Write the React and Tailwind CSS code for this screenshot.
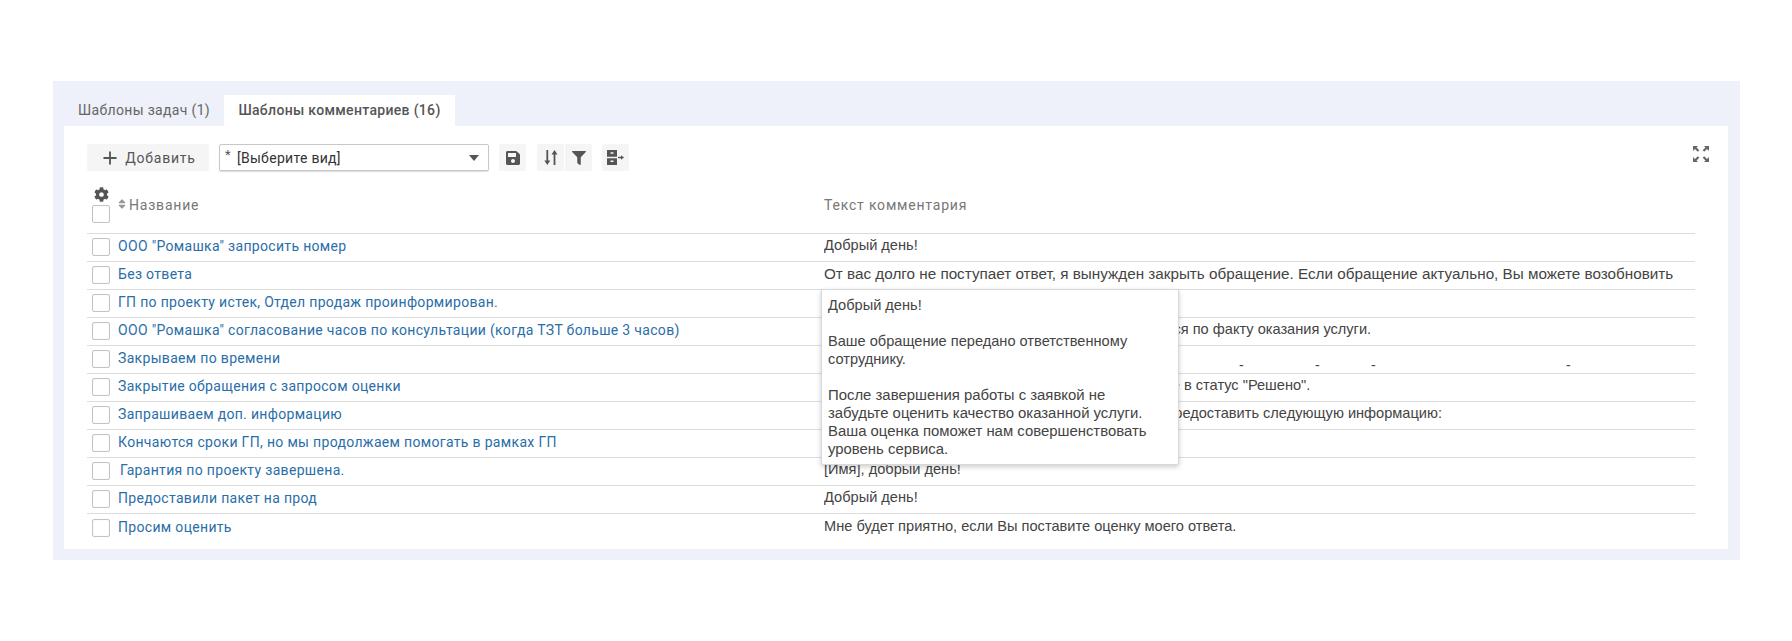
import React from "react";
import { FaSave, FaFilter, FaCog, FaSort } from "react-icons/fa";
import { Plus } from "lucide-react";

const rows = [
  { n: 'ООО "Ромашка" запросить номер', t: "Добрый день!" },
  { n: "Без ответа", t: "От вас долго не поступает ответ, я вынужден закрыть обращение. Если обращение актуально, Вы можете возобновить", big: true },
  { n: "ГП по проекту истек, Отдел продаж проинформирован.", t: "Добрый день!" },
  { n: 'ООО "Ромашка" согласование часов по консультации (когда ТЗТ больше 3 часов)', t: "Добрый день! Оплата консультации теперь считается по факту оказания услуги." },
  { n: "Закрываем по времени", t: "", dashes: true },
  { n: "Закрытие обращения с запросом оценки", t: 'Добрый день! Сегодня я переведу Ваше обращение в статус "Решено".' },
  { n: "Запрашиваем доп. информацию", t: "Добрый день! Для решения вопросов просим Вас предоставить следующую информацию:" },
  { n: "Кончаются сроки ГП, но мы продолжаем помогать в рамках ГП", t: "Добрый день!" },
  { n: "Гарантия по проекту завершена.", t: "[Имя], добрый день!", extra: true },
  { n: "Предоставили пакет на прод", t: "Добрый день!" },
  { n: "Просим оценить", t: "Мне будет приятно, если Вы поставите оценку моего ответа." },
];

function Check() {
  return <span className="block w-[18px] h-[18px] shrink-0 rounded-[2px] border border-[#c4c4c4] bg-white shadow-[inset_0_0_1px_#ddd]" />;
}

function IconBtn({ children, className = "" }) {
  return <button className={`w-[27px] h-[27px] rounded-[2px] bg-[#f5f5f5] flex items-center justify-center text-[#555] ${className}`}>{children}</button>;
}

function SortArrows() {
  return (
    <svg width="14" height="15" viewBox="0 0 14 15" fill="#555">
      <path d="M2.400 0h1.800v10.500H6.300L3.300 15 .3 10.500h2.100z" />
      <path d="M9.600 15h1.800V4.500h2.100L10.500 0 7.500 4.500h2.100z" />
    </svg>
  );
}

function ExportIcon() {
  return (
    <svg width="17" height="15" viewBox="0 0 17 15" fill="#555">
      <path fillRule="evenodd" d="M0 0h10v6.800H0zM3.500 2.200v1.600h3V2.200zM0 8.200h10V15H0zM3.500 10.400V12h3v-1.600z" />
      <path d="M11 6.700h3V5.200L17 7.500l-3 2.300V8.300h-3z" />
    </svg>
  );
}

function ExpandIcon() {
  return (
    <svg width="16" height="16" viewBox="0 0 16 16" fill="#666">
      <path d="M0 0h5L3.500 1.500 6.300 4.300 4.800 5.800 2 3 .5 4.500 0 5z" />
      <path d="M16 0h-5l1.500 1.500-2.800 2.800 1.500 1.500L14 3l1.500 1.500.5.5z" />
      <path d="M0 16h5l-1.500-1.500 2.800-2.800-1.500-1.500L2 13 .5 11.500 0 11z" />
      <path d="M16 16h-5l1.500-1.500-2.800-2.800 1.500-1.500 2.800 2.800 1.500-1.500.5-.5z" />
    </svg>
  );
}

export default function App() {
  return (
    <div className="h-[641px] bg-white pt-[81px] font-['Roboto',sans-serif] overflow-hidden">
      <div className="mx-[53px] w-[1687px] h-[479px] bg-[#eef1f9] px-[11px] pt-[14px]">
        <div className="flex h-[31px]">
          <div className="h-[31px] w-[160px] pl-[14px] flex items-center text-[14px] tracking-[0.33px] text-[#666]">Шаблоны задач (1)</div>
          <div className="h-[31px] w-[231px] bg-white flex items-center justify-center text-[14px] tracking-[0.32px] text-[#555] font-medium">Шаблоны комментариев (16)</div>
        </div>
        <div className="relative h-[423px] w-[1664px] bg-white pl-[23px] pt-[18px]">
          <div className="flex items-center h-[27px]">
            <button className="w-[122px] h-[27px] rounded-[2px] bg-[#f5f5f5] flex items-center justify-center gap-[5px] pt-[1px] text-[14px] tracking-[0.75px] text-[#555]">
              <Plus size={20} strokeWidth={2.2} className="text-[#555]" />
              Добавить
            </button>
            <div className="ml-[10px] w-[270px] h-[27px] rounded-[2px] border border-[#c8c8c8] shadow-[0_1px_1px_#ddd] flex items-center px-[5px] pt-[1px] text-[14px] tracking-[0.3px] text-[#333]">
              <span className="text-[#555] mr-[6px] -mt-[6px] text-[13px]">*</span>
              <span className="flex-1">[Выберите вид]</span>
              <svg width="10" height="6" viewBox="0 0 10 6" className="mr-[4px]" fill="#555"><path d="M0 0h10L5 6z" /></svg>
            </div>
            <IconBtn className="ml-[10px]"><FaSave size={16} /></IconBtn>
            <IconBtn className="ml-[11px] rounded-r-none"><SortArrows /></IconBtn>
            <IconBtn className="ml-[1px] rounded-l-none"><FaFilter size={14} /></IconBtn>
            <IconBtn className="ml-[10px]"><ExportIcon /></IconBtn>
          </div>
          <div className="absolute right-[19px] top-[20px]"><ExpandIcon /></div>

          <div className="w-[1608px] mt-[17px]">
            <div className="flex h-[46px] border-b border-[#dcdcdc] text-[14px] tracking-[0.8px] text-[#777]">
              <div className="w-[737px] flex items-start">
                <div className="ml-[5px] w-[18px] h-full flex flex-col items-center">
                  <FaCog size={15} className="text-[#555] -mt-[1px]" />
                  <span className="mt-[3px]"><Check /></span>
                </div>
                <FaSort size={12} className="ml-[6px] mt-[10px] text-[#999]" />
                <span className="ml-[1px] mt-[7px]">Название</span>
              </div>
              <div className="mt-[7px]">Текст комментария</div>
            </div>
            {rows.map((r, i) => (
              <div key={i} className={`flex items-center h-[28px] ${i < rows.length - 1 ? "border-b border-[#dcdcdc] pb-[1px]" : ""}`}>
                <div className="w-[737px] flex items-center">
                  <span className="ml-[5px]"><Check /></span>
                  <span className="ml-[8px] pb-[2px] text-[14px] tracking-[0.32px] text-[#2a6ea8] whitespace-nowrap">{r.extra ? <span className="ml-[2px]" /> : null}{r.n}</span>
                </div>
                {r.dashes ? (
                  <div className="relative self-stretch flex-1 font-['Liberation_Sans',sans-serif] text-[14px] text-[#444]">
                    <span className="absolute left-[415px] top-[9px]">-</span>
                    <span className="absolute left-[491px] top-[9px]">-</span>
                    <span className="absolute left-[547px] top-[9px]">-</span>
                    <span className="absolute left-[742px] top-[9px]">-</span>
                  </div>
                ) : (
                  <div className={`flex-1 pb-[2px] font-['Liberation_Sans',sans-serif] ${r.big ? "text-[15.25px]" : "text-[14.6px]"} text-[#444] whitespace-nowrap overflow-hidden`}>{r.t}</div>
                )}
              </div>
            ))}
          </div>

          <div className="absolute left-[757px] top-[163px] w-[358px] h-[176px] bg-white rounded-[2px] border border-[#d8d8d8] shadow-[0_2px_5px_rgba(0,0,0,0.2)] pl-[6px] pr-[20px] py-[6px] text-[14.6px] leading-[18px] text-[#444] font-['Liberation_Sans',sans-serif]">
            <p>Добрый день!</p>
            <p className="mt-[18px]">Ваше обращение передано ответственному сотруднику.</p>
            <p className="mt-[18px] text-[14.9px]">После завершения работы с заявкой не забудьте оценить качество оказанной услуги. Ваша оценка поможет нам совершенствовать уровень сервиса.</p>
          </div>
        </div>
      </div>
    </div>
  );
}
